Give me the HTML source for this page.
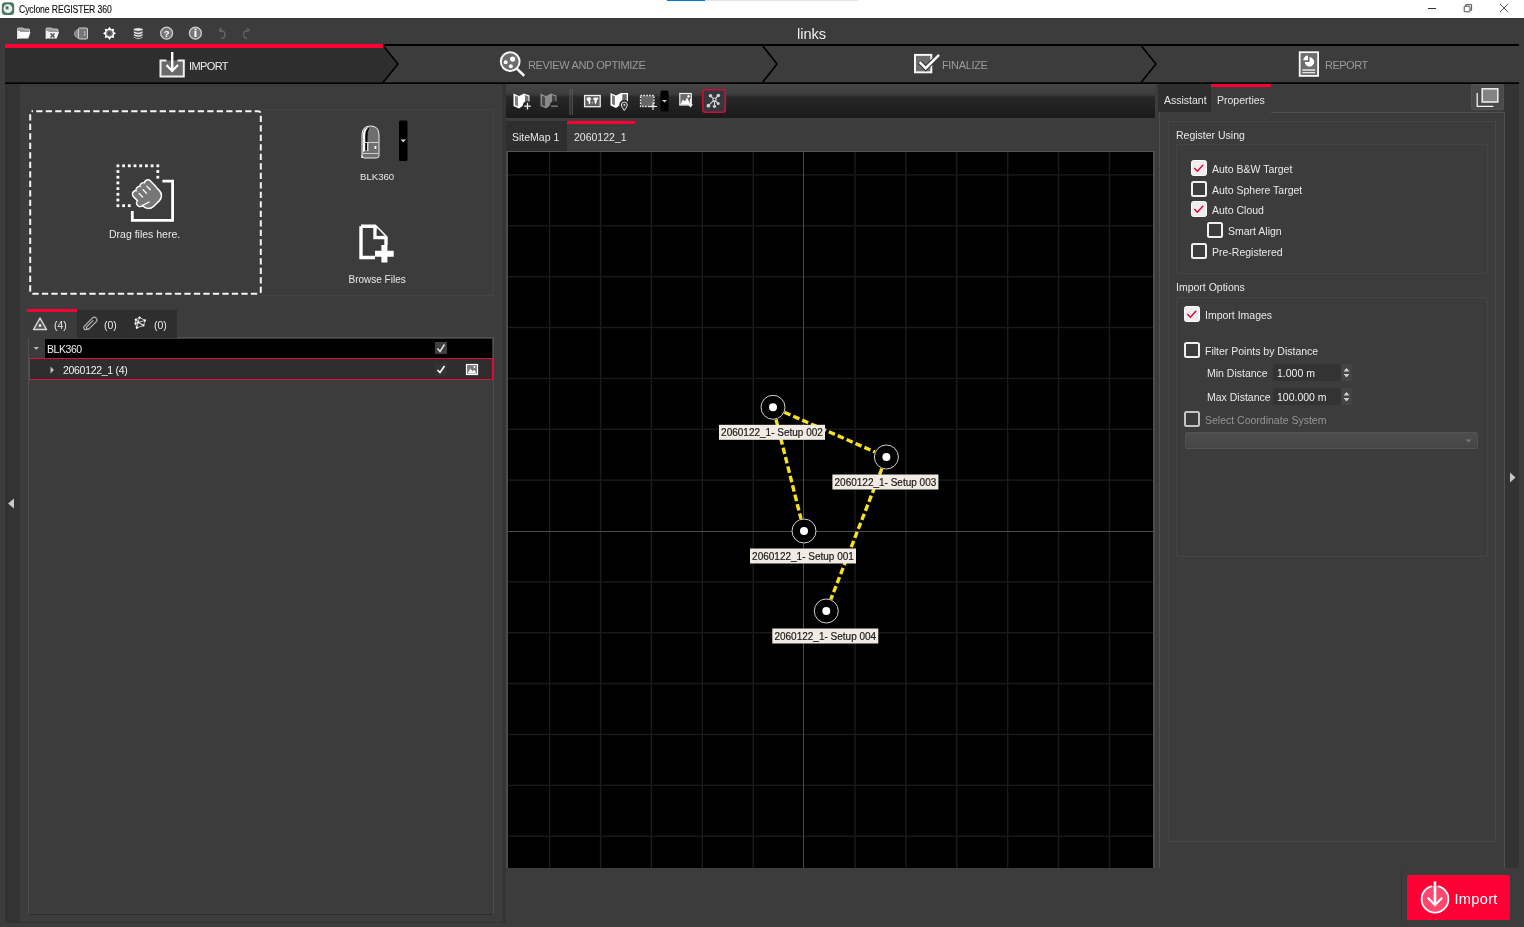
<!DOCTYPE html>
<html><head><meta charset="utf-8">
<style>
*{box-sizing:border-box;margin:0;padding:0}
html,body{width:1524px;height:927px;overflow:hidden;background:#3c3c3c;font-family:"Liberation Sans",sans-serif;color:#e6e6e6;font-size:10.5px}
.a{position:absolute}
.t{position:absolute;white-space:nowrap;line-height:1}
svg{position:absolute;overflow:visible}
</style></head><body>
<!-- title bar -->
<div class="a" style="left:0;top:0;width:1524px;height:18px;background:#fff"></div>
<div class="a" style="left:667px;top:0;width:38px;height:1px;background:#0078d7"></div>
<div class="a" style="left:705px;top:0;width:153px;height:1px;background:#e2e2e2"></div>
<svg style="left:0;top:0" width="18" height="18"><rect x="1.8" y="2.3" width="12.4" height="12.6" rx="3.5" fill="#487a62"/><circle cx="7.9" cy="8.6" r="4.4" fill="#eef3ef"/><circle cx="7.2" cy="7.9" r="2" fill="#9ab5a6"/><circle cx="7" cy="7.7" r="1.2" fill="#3f6f58"/></svg>
<div class="t" style="left:18.5px;top:4px;font-size:10.5px;letter-spacing:-0.1px;transform:scaleX(0.82);transform-origin:0 0;color:#111;-webkit-text-stroke:0.15px #111">Cyclone REGISTER 360</div>
<svg style="left:1420px;top:0" width="104" height="18">
 <line x1="8" y1="8.5" x2="16" y2="8.5" stroke="#333" stroke-width="1"/>
 <rect x="44.2" y="6.2" width="5.8" height="5.6" rx="0.6" fill="none" stroke="#333" stroke-width="0.9"/><path d="M45.8 6 V4.6 H51.6 V10.2 H50.2" fill="none" stroke="#444" stroke-width="0.9"/>
 <path d="M80 4 L88.2 12 M88.2 4 L80 12" stroke="#333" stroke-width="0.9"/>
</svg>

<!-- app body -->
<svg style="left:0;top:18px" width="260" height="26">
 <!-- open folder -->
 <path d="M17.5 21 V11 Q17.5 10 18.5 10 H23 L24 11 H28.5 Q29.5 11 29.5 12 V14" fill="#9a9a9a" stroke="#ddd" stroke-width="0.8"/>
 <path d="M17.3 20.5 L19.8 14 H30.5 L28.3 20.5 Z" fill="#fff"/>
 <path d="M17.5 20.6 V13 H20 V19 Z" fill="#f4f4f4"/>
 <!-- close folder -->
 <path d="M46 21 V11 Q46 10 47 10 H51.5 L52.5 11 H57 Q58 11 58 12 V14" fill="#9a9a9a" stroke="#ddd" stroke-width="0.8"/>
 <path d="M45.8 20.5 L48.3 14 H59 L56.8 20.5 Z" fill="#f2f2f2"/>
 <path d="M46 20.6 V13 H48.5 V19 Z" fill="#eee"/>
 <path d="M50.5 15.5 L54.5 19.5 M54.5 15.5 L50.5 19.5" stroke="#555" stroke-width="1.6"/>
 <!-- scanner-ish -->
 <path d="M74.5 15 Q74.5 13.5 76 12.5 L78.5 11 V20.5 L76 19 Q74.5 18 74.5 16.5 Z" fill="#8a8a8a" stroke="#aaa" stroke-width="0.7"/>
 <rect x="78.5" y="10" width="9" height="11" rx="1" fill="#777" stroke="#cfcfcf" stroke-width="1"/>
 <rect x="84" y="13.5" width="1.3" height="1.3" fill="#ddd"/><rect x="84" y="16" width="1.3" height="1.3" fill="#ddd"/>
 <!-- gear -->
 <defs><radialGradient id="gg"><stop offset="0" stop-color="#3a3a3a"/><stop offset="1" stop-color="#7a7a7a"/></radialGradient></defs>
 <polygon points="109.50,8.75 111.22,11.19 114.17,10.68 113.66,13.63 116.10,15.35 113.66,17.07 114.17,20.02 111.22,19.51 109.50,21.95 107.78,19.51 104.83,20.02 105.34,17.07 102.90,15.35 105.34,13.63 104.83,10.68 107.78,11.19" fill="#fff"/>
 <circle cx="109.5" cy="15.35" r="3.3" fill="url(#gg)"/>
 <!-- db -->
 <g fill="#eee" stroke="#3c3c3c" stroke-width="0.8">
  <path d="M133.5 18 Q138.2 21.5 143 18 V19.5 Q138.2 23 133.5 19.5 Z"/>
  <path d="M133.5 15 Q138.2 18.5 143 15 V17.5 Q138.2 21 133.5 17.5 Z"/>
  <path d="M133.5 12.5 Q138.2 16 143 12.5 V15 Q138.2 18.5 133.5 15 Z"/>
  <ellipse cx="138.2" cy="11.5" rx="4.8" ry="1.8"/>
 </g>
 <!-- help -->
 <circle cx="166.6" cy="15.2" r="6" fill="#777" stroke="#d0d0d0" stroke-width="1.2"/>
 <text x="166.6" y="19" text-anchor="middle" font-family="Liberation Sans" font-weight="bold" font-size="9.5" fill="#fff">?</text>
 <circle cx="195.4" cy="15.2" r="6" fill="#777" stroke="#d0d0d0" stroke-width="1.2"/>
 <rect x="194.5" y="10.6" width="1.9" height="1.7" fill="#fff"/><rect x="194.5" y="13" width="1.9" height="6" fill="#fff"/>
 <!-- undo/redo -->
 <path d="M219 12.5 Q225 12 225 16.5 Q225 20 221.5 20.5 M219 12.5 L221.5 10 M219 12.5 L222 14" fill="none" stroke="#6a6a6a" stroke-width="1.3"/>
 <path d="M249.5 12.5 Q243.5 12 243.5 16.5 Q243.5 20 247 20.5 M249.5 12.5 L247 10 M249.5 12.5 L246.5 14" fill="none" stroke="#626262" stroke-width="1.3"/>
</svg>
<div class="t" style="left:797px;top:27px;font-size:14.5px;color:#f0f0f0">links</div>

<!-- steps bar -->
<svg style="left:0;top:44px" width="1524" height="41" overflow="visible">
 <rect x="5" y="0" width="1514" height="40" fill="#3c3c3c"/>
 <path d="M5 1 H383 L398 20 L383 39 H5 Z" fill="#2e2e2e"/>
 <rect x="5" y="0" width="1514" height="2" fill="#000"/>
 <rect x="5" y="38" width="1514" height="1" fill="#121212"/>
 <rect x="5" y="39" width="1514" height="1" fill="#000"/>
 <rect x="5" y="0" width="378" height="4" fill="#ff0033"/>
 <path d="M383 1.5 L398 20 L383 38.5" fill="none" stroke="#000" stroke-width="1.6"/>
 <path d="M762.5 1.5 L777 20 L762.5 38.5" fill="none" stroke="#000" stroke-width="1.6"/>
 <path d="M1141 1.5 L1156 20 L1141 38.5" fill="none" stroke="#000" stroke-width="1.6"/>
</svg>
<div class="t" style="left:189px;top:61px;font-size:11px;letter-spacing:-0.6px;color:#eee">IMPORT</div>
<div class="t" style="left:528px;top:60px;font-size:11px;letter-spacing:-0.35px;color:#9a9a9a">REVIEW AND OPTIMIZE</div>
<div class="t" style="left:942px;top:60px;font-size:11px;letter-spacing:-0.35px;color:#9a9a9a">FINALIZE</div>
<div class="t" style="left:1325px;top:60px;font-size:11px;letter-spacing:-0.5px;color:#9a9a9a">REPORT</div>
<svg style="left:150px;top:48px" width="50" height="34">
 <path d="M16.5 12.5 H10.5 V28.5 H33.8 V12.5 H27.5" fill="#6a6a6a" stroke="#f0f0f0" stroke-width="2"/>
 <rect x="17.5" y="13.5" width="9" height="3" fill="#6a6a6a"/>
 <path d="M22.2 4 V22" stroke="#fff" stroke-width="2.4"/>
 <path d="M16.5 17 L22.2 23 L28 17" fill="none" stroke="#fff" stroke-width="2.2"/>
</svg>
<svg style="left:495px;top:48px" width="34" height="34">
 <circle cx="15.2" cy="13.6" r="9.4" fill="#6c6c6c" stroke="#f6f6f6" stroke-width="2"/>
 <path d="M21.8 20.6 L29.2 27.8" stroke="#f6f6f6" stroke-width="2.6"/>
 <circle cx="17.6" cy="11.1" r="2.6" fill="#fff"/><circle cx="10.7" cy="14.3" r="2" fill="#fff"/><circle cx="15.8" cy="18.2" r="2" fill="#fff"/>
</svg>
<svg style="left:910px;top:48px" width="34" height="34">
 <rect x="5" y="6.9" width="16.3" height="17.4" fill="#6c6c6c" stroke="#f6f6f6" stroke-width="2"/>
 <path d="M9.7 14.1 L15.7 20.2 L29.1 6.8" fill="none" stroke="#3c3c3c" stroke-width="5"/>
 <path d="M9.7 14.1 L15.7 20.2 L29.1 6.8" fill="none" stroke="#fff" stroke-width="2.5"/>
</svg>
<svg style="left:1290px;top:48px" width="34" height="34">
 <rect x="9.7" y="4.2" width="18.4" height="23.7" fill="#6c6c6c" stroke="#f6f6f6" stroke-width="1.8"/>
 <path d="M19.5 14 V9.3 A4.7 4.7 0 1 1 14.8 14 Z" fill="#fff"/>
 <path d="M18 12.3 H13.3 A4.7 4.7 0 0 1 18 7.6 Z" fill="#fff"/>
 <path d="M12.3 22 H25 M12.3 24.6 H25" stroke="#e6e6e6" stroke-width="1.3"/>
</svg>

<!-- left panel -->
<div class="a" style="left:5px;top:84px;width:15px;height:839px;background:#333"></div>
<div class="a" style="left:20px;top:922px;width:486px;height:1px;background:#353535"></div>
<div class="a" style="left:502px;top:84px;width:4px;height:839px;background:#353535"></div>
<svg style="left:5px;top:496px" width="15" height="16"><path d="M3 7.5 L9 2.5 V12.5 Z" fill="#c8c8c8"/></svg>
<!-- drop zone -->
<div class="a" style="left:261px;top:109px;width:233px;height:187px;border:1px solid #444;border-left:none"></div>
<svg style="left:29px;top:110px" width="234" height="186"><rect x="1.2" y="1.2" width="230.6" height="182.6" rx="2.5" fill="none" stroke="#f4f4f4" stroke-width="2" stroke-dasharray="6.3 3.2" stroke-dashoffset="6"/></svg>
<svg style="left:105px;top:155px" width="80" height="80">
 <g fill="#fff">
 <rect x="11.5" y="9.4" width="2.8" height="2.8"/><rect x="17.2" y="9.4" width="2.8" height="2.8"/><rect x="22.9" y="9.4" width="2.8" height="2.8"/><rect x="28.6" y="9.4" width="2.8" height="2.8"/><rect x="34.3" y="9.4" width="2.8" height="2.8"/><rect x="40" y="9.4" width="2.8" height="2.8"/><rect x="45.7" y="9.4" width="2.8" height="2.8"/><rect x="51.4" y="9.4" width="2.8" height="2.8"/>
 <rect x="51.4" y="15.1" width="2.8" height="2.8"/><rect x="51.4" y="20.8" width="2.8" height="2.8"/>
 <rect x="11.5" y="15.1" width="2.8" height="2.8"/><rect x="11.5" y="20.8" width="2.8" height="2.8"/><rect x="11.5" y="26.5" width="2.8" height="2.8"/><rect x="11.5" y="32.2" width="2.8" height="2.8"/><rect x="11.5" y="37.9" width="2.8" height="2.8"/><rect x="11.5" y="43.6" width="2.8" height="2.8"/><rect x="11.5" y="49.3" width="2.8" height="2.8"/>
 <rect x="17.2" y="49.3" width="2.8" height="2.8"/><rect x="22.9" y="49.3" width="2.8" height="2.8"/>
 </g>
 <path d="M57.4 26.1 H67.6 V65.4 H27.3 V56" fill="none" stroke="#fff" stroke-width="2.8"/>
 <g transform="translate(42.5 39.5) rotate(-44)">
  <g fill="#fff" stroke="#fff" stroke-width="3"><rect x="-10.5" y="-5" width="21" height="17" rx="6.5"/><rect x="-10.8" y="-11" width="5.6" height="13" rx="2.8"/><rect x="-5.4" y="-11.5" width="5.6" height="13" rx="2.8"/><rect x="0" y="-11.5" width="5.6" height="13" rx="2.8"/><rect x="5.2" y="-10.5" width="5.6" height="13" rx="2.8"/><rect x="-13" y="2" width="9" height="5.5" rx="2.7" transform="rotate(20)"/></g>
  <g fill="#777"><rect x="-10.5" y="-5" width="21" height="17" rx="6.5"/><rect x="-10.8" y="-11" width="5.6" height="13" rx="2.8"/><rect x="-5.4" y="-11.5" width="5.6" height="13" rx="2.8"/><rect x="0" y="-11.5" width="5.6" height="13" rx="2.8"/><rect x="5.2" y="-10.5" width="5.6" height="13" rx="2.8"/></g>
  <rect x="-13" y="2" width="9" height="5.5" rx="2.7" transform="rotate(20)" fill="#777"/>
  <path d="M-5.3 -6.5 V-1.5 M0.1 -6.5 V-1.5 M5.3 -6.5 V-1.5 M-11 4.5 L-4 6.5" stroke="#fff" stroke-width="1.2" stroke-linecap="round"/>
 </g>
</svg>
<div class="t" style="left:109px;top:229px;font-size:10.5px;color:#e8e8e8">Drag files here.</div>
<!-- scanner -->
<svg style="left:340px;top:110px" width="80" height="80">
 <path d="M22 48 V25 Q22 16 30.5 16 Q39 16 39 25 V45.5 Q39 48 36.5 48 H24.5 Q22 48 22 45.5 Z" fill="#6f6f6f" stroke="#ededed" stroke-width="1"/>
 <path d="M23 42 V25 Q23 18 28.5 17 Q25 20 25 26 V41 Z" fill="#fff"/>
 <path d="M25.5 40 V26 Q25.5 19.5 29.5 17.3 Q27.5 21 27.5 27 V40 Z" fill="#000"/>
 <path d="M22.5 32.5 H38.5 M22.5 43.5 H38.5" stroke="#ddd" stroke-width="0.9"/>
 <rect x="27" y="33" width="1.5" height="8" fill="#ddd"/>
 <rect x="34.5" y="36" width="1.8" height="3" fill="#fff"/>
 <rect x="59" y="10.5" width="8.5" height="40.5" rx="1.5" fill="#000"/>
 <path d="M60.5 29.5 H66 L63.25 32.3 Z" fill="#ddd"/>
</svg>
<div class="t" style="left:360px;top:172px;font-size:9.6px;color:#e8e8e8">BLK360</div>
<svg style="left:340px;top:215px" width="80" height="80">
 <path d="M21 11.2 H35 L46 22.5 V30 M41.5 42.5 H21 V11.2" fill="none" stroke="#fff" stroke-width="3.4" stroke-linejoin="miter"/>
 <path d="M35 11 V22.5 H46" fill="none" stroke="#fff" stroke-width="3.4"/>
 <path d="M36.8 12.8 V20.7 H44.7 Z" fill="#3c3c3c"/>
 <rect x="35" y="30" width="19" height="18.5" fill="#3c3c3c"/>
 <path d="M44.4 30 V47.6 M35 38.8 H53.7" stroke="#fff" stroke-width="6"/>
</svg>
<div class="t" style="left:348.5px;top:274.5px;font-size:10px;color:#e8e8e8">Browse Files</div>
<!-- tabs -->
<div class="a" style="left:77px;top:310px;width:100px;height:28px;background:#2e2e2e"></div>
<div class="a" style="left:27px;top:310px;width:50px;height:28px;background:#3b3b3b"></div>
<div class="a" style="left:27px;top:309px;width:50px;height:3px;background:#fa0032"></div>
<svg style="left:27px;top:312px" width="150" height="26">
 <path d="M13 6 L19.5 17.5 H6.5 Z" fill="#5a5a5a" stroke="#d8d8d8" stroke-width="1.5" stroke-linejoin="round"/>
 <circle cx="13" cy="13.5" r="1.3" fill="#fff"/>
 <path d="M58 17.6 L56.8 16.2 Q56.4 15.2 57.2 14.3 L65.3 6.2 Q67.3 4.3 69.1 6.1 Q70.9 7.9 69 9.8 L62 16.8 Q60.9 17.9 59.8 16.8 Q58.8 15.8 59.9 14.7 L66 8.6" fill="none" stroke="#b8b8b8" stroke-width="1.15" stroke-linecap="round" stroke-linejoin="round"/>
 <path d="M58 17.6 L61.5 17.2" stroke="#b8b8b8" stroke-width="1.15" stroke-linecap="round"/>
 <g stroke="#d8d8d8" stroke-width="0.9" fill="none"><path d="M112.6 5.5 L118 8.4 L116.5 13.5 L109.8 15.8 L108.5 11.5 L108.8 7.7 Z M111 10.5 L112.6 5.5 M111 10.5 L118 8.4 M111 10.5 L116.5 13.5 M111 10.5 L109.8 15.8 M111 10.5 L108.5 11.5 M111 10.5 L108.8 7.7 M108.8 7.7 L116.5 13.5"/></g>
 <g fill="#fff"><circle cx="112.6" cy="5.5" r="1.1"/><circle cx="118" cy="8.4" r="1.1"/><circle cx="116.5" cy="13.5" r="1.1"/><circle cx="109.8" cy="15.8" r="1.1"/><circle cx="108.5" cy="11.5" r="1.1"/><circle cx="108.8" cy="7.7" r="1.1"/><circle cx="111" cy="10.5" r="0.9"/></g>
</svg>
<div class="t" style="left:54px;top:320px;font-size:10.5px;color:#e8e8e8">(4)</div>
<div class="t" style="left:104px;top:320px;font-size:10.5px;color:#e8e8e8">(0)</div>
<div class="t" style="left:154px;top:320px;font-size:10.5px;color:#e8e8e8">(0)</div>
<!-- tree -->
<div class="a" style="left:28px;top:338px;width:466px;height:577px;border-left:1px solid #4e4e4e;border-right:1px solid #4e4e4e;border-bottom:1px solid #2e2e2e"></div>
<div class="a" style="left:29px;top:338px;width:16px;height:20px;background:#3b3b3b"></div>
<div class="a" style="left:45px;top:339px;width:447px;height:19px;background:#000"></div><div class="a" style="left:177px;top:337px;width:317px;height:1px;background:#505050"></div>
<svg style="left:29px;top:338px" width="16" height="20"><path d="M4.5 9 H10 L7.25 11.7 Z" fill="#bdbdbd"/></svg>
<div class="t" style="left:47px;top:344px;font-size:10.5px;letter-spacing:-0.45px;color:#f0f0f0">BLK360</div>
<div class="a" style="left:435px;top:342px;width:12px;height:12px;background:#3f3f3f"></div>
<svg style="left:435px;top:342px" width="12" height="12"><path d="M2.5 6.5 L5 9.5 L9.5 2.5" fill="none" stroke="#e0e0e0" stroke-width="1.5"/></svg>
<div class="a" style="left:29px;top:358.3px;width:463.5px;height:21.8px;border:1.6px solid #dc1038;background:#2e2e2e"></div>
<svg style="left:48px;top:364px" width="8" height="12"><path d="M2.5 2.5 V9.5 L6 6 Z" fill="#bdbdbd"/></svg>
<div class="t" style="left:63px;top:365px;font-size:10.5px;letter-spacing:-0.3px;color:#f0f0f0">2060122_1 (4)</div>
<div class="a" style="left:435px;top:363px;width:12px;height:13px;background:#333"></div>
<svg style="left:435px;top:363px" width="12" height="13"><path d="M2.5 7 L5 9.5 L9.5 3" fill="none" stroke="#fff" stroke-width="1.6"/></svg>
<svg style="left:464px;top:362px" width="16" height="15"><rect x="2.5" y="2.5" width="11" height="10" fill="#777" stroke="#fff" stroke-width="1.2"/><path d="M3.5 11.5 L6.5 6.5 L8.5 9.5 L10 7.5 L12.5 11.5 Z" fill="#fff"/><circle cx="10.5" cy="5" r="1" fill="#fff"/></svg>


<!-- center panel -->
<div class="a" style="left:506px;top:84px;width:649px;height:34px;background:linear-gradient(#454545 0px,#3e3e3e 9px,#383838 11px,#282828 13px,#1a1a1a 34px)"></div>
<svg style="left:506px;top:84px" width="240" height="34">
 <!-- map plus -->
 <g transform="translate(7 9)">
  <path d="M0.5 0.5 L6 3 L11 0.5 L16.5 2.5 V14 L11 12 L6 15.5 L0.5 13 Z" fill="#fff"/>
  <path d="M2 2.5 L5 4 V13.5 L2 12 Z" fill="#808080"/>
  <path d="M12 2 L15.5 3.5 V9 H12 Z" fill="#707070"/>
  <circle cx="14.5" cy="13" r="4.8" fill="#222"/>
  <path d="M14.5 9.8 V16.5 M11.2 13.2 H17.8" stroke="#f0f0f0" stroke-width="1.3"/>
 </g>
 <g transform="translate(34 9)" opacity="0.55">
  <path d="M0.5 0.5 L6 3 L11 0.5 L16.5 2.5 V14 L11 12 L6 15.5 L0.5 13 Z" fill="#ddd"/>
  <path d="M2 2.5 L5 4 V13.5 L2 12 Z" fill="#666"/>
  <path d="M12 2 L15.5 3.5 V9 H12 Z" fill="#555"/>
  <circle cx="14.5" cy="13" r="4.8" fill="#222"/>
  <path d="M11.2 13.2 H17.8" stroke="#ddd" stroke-width="1.3"/>
 </g>
 <rect x="63.5" y="5" width="1" height="26" fill="#5a5a5a"/><rect x="65.8" y="5" width="1" height="26" fill="#5a5a5a"/>
 <!-- world -->
 <rect x="78.6" y="11.5" width="15.6" height="11.2" fill="#5e5e5e" stroke="#eee" stroke-width="1.3"/>
 <path d="M80.5 14.2 Q82 13 84.5 13.5 L85.2 15.5 L84 16.3 L84.5 18 L83.8 20.5 L82.6 19.5 L82.5 17.5 L81 16.5 Z" fill="#fff"/>
 <path d="M87.5 13.8 Q89.5 13 92 13.8 L92.3 15 L91 16 L90.5 18.5 L89.5 20.5 L88.5 18.5 L88.6 16.5 L87.4 15.8 Z" fill="#fff"/>
 <path d="M85.5 18 L86.5 20.5 L87 17.5" fill="#aaa"/>
 <!-- map pin -->
 <g transform="translate(104 8)">
  <path d="M0.5 1 L6 3.5 L11 1 L18 1 V10 L11 12.5 L6 16 L0.5 13.5 Z" fill="#fff"/>
  <path d="M2 3 L5 4.5 V13.5 L2 12 Z" fill="#7a7a7a"/>
  <path d="M12.3 2.3 H16.7 V9 L12.3 10.5 Z" fill="#6a6a6a"/>
  <circle cx="14.3" cy="13" r="5" fill="#222"/>
  <path d="M14.3 18.5 Q11.3 15 11.3 13 A3 3 0 0 1 17.3 13 Q17.3 15 14.3 18.5 Z" fill="#3a3a3a" stroke="#e6e6e6" stroke-width="1"/>
  <circle cx="14.3" cy="12.8" r="0.9" fill="#eee"/>
 </g>
 <!-- rect select -->
 <rect x="134.5" y="11.5" width="13.5" height="11" fill="#666" stroke="#eee" stroke-width="1.3" stroke-dasharray="1.6 1.3"/>
 <path d="M147 18.5 V26 M143.5 22.5 H151" stroke="#eee" stroke-width="1.1"/>
 <rect x="154.5" y="6.5" width="8" height="21" rx="1.5" fill="#000"/>
 <path d="M156 16 H161 L158.5 18.5 Z" fill="#ccc"/>
 <!-- image import -->
 <rect x="173.8" y="9.5" width="11.5" height="11.5" fill="#6a6a6a" stroke="#eee" stroke-width="1.2"/>
 <path d="M174.5 20.5 L177 15.5 L179 17.5 L181 13.5 L184.5 20.5 Z" fill="#fff"/>
 <circle cx="182.5" cy="12.2" r="1.2" fill="#fff"/>
 <path d="M184.5 15 V22.5" stroke="#fff" stroke-width="1.2"/><path d="M182 20.5 L184.5 23.5 L187 20.5 Z" fill="#fff"/>
 <!-- network active -->
 <rect x="196.8" y="5.8" width="22.5" height="22.5" rx="2.5" fill="#34373b" stroke="#c8123a" stroke-width="1.6"/>
 <g stroke="#d0d0d0" stroke-width="1.2" fill="none">
  <path d="M208.5 15.6 L204.5 11.7 M208.5 15.6 L212.3 11.5 M208.5 15.6 L202.4 21.7 M208.5 15.6 L212.2 19.6 M208.5 15.6 V22.5"/>
 </g>
 <g fill="#d0d0d0"><circle cx="204.5" cy="11.7" r="1.8"/><circle cx="212.3" cy="11.5" r="1.8"/><circle cx="202.4" cy="21.7" r="1.9"/><circle cx="212.2" cy="19.6" r="1.5"/><circle cx="208.5" cy="22.3" r="1.6"/><circle cx="208.5" cy="15.6" r="2.1"/></g>
 <circle cx="208.5" cy="15.4" r="0.9" fill="#222"/>
</svg>
<div class="a" style="left:506px;top:118px;width:649px;height:3px;background:#3d3d3d"></div><div class="a" style="left:506px;top:151px;width:649px;height:1px;background:#525252"></div>
<div class="a" style="left:506px;top:121px;width:61px;height:30px;background:#2e2e2e"></div>
<div class="a" style="left:567px;top:121px;width:68px;height:3px;background:#fa0032"></div>
<div class="t" style="left:512px;top:132px;font-size:10.5px">SiteMap 1</div>
<div class="t" style="left:574px;top:132px;font-size:10.5px">2060122_1</div>
<svg style="left:506px;top:152px" width="649" height="716" shape-rendering="crispEdges">
<rect x="0" y="0" width="649" height="716" fill="#000"/>
<rect x="0" y="0" width="2" height="716" fill="#4c4c4c"/>
<rect x="647" y="0" width="2" height="716" fill="#4c4c4c"/>
<g>
<rect x="2" y="22" width="645" height="1" fill="rgb(21,21,21)"/>
<rect x="2" y="23" width="645" height="1" fill="rgb(16,16,16)"/>
<rect x="2" y="73" width="645" height="1" fill="rgb(24,24,24)"/>
<rect x="2" y="74" width="645" height="1" fill="rgb(12,12,12)"/>
<rect x="2" y="123" width="645" height="1" fill="rgb(1,1,1)"/>
<rect x="2" y="124" width="645" height="1" fill="rgb(26,26,26)"/>
<rect x="2" y="125" width="645" height="1" fill="rgb(9,9,9)"/>
<rect x="2" y="174" width="645" height="1" fill="rgb(5,5,5)"/>
<rect x="2" y="175" width="645" height="1" fill="rgb(26,26,26)"/>
<rect x="2" y="176" width="645" height="1" fill="rgb(6,6,6)"/>
<rect x="2" y="225" width="645" height="1" fill="rgb(8,8,8)"/>
<rect x="2" y="226" width="645" height="1" fill="rgb(26,26,26)"/>
<rect x="2" y="227" width="645" height="1" fill="rgb(2,2,2)"/>
<rect x="2" y="276" width="645" height="1" fill="rgb(11,11,11)"/>
<rect x="2" y="277" width="645" height="1" fill="rgb(25,25,25)"/>
<rect x="2" y="327" width="645" height="1" fill="rgb(15,15,15)"/>
<rect x="2" y="328" width="645" height="1" fill="rgb(22,22,22)"/>
<rect x="2" y="379" width="645" height="1" fill="#4a4a4a"/>
<rect x="2" y="429" width="645" height="1" fill="rgb(22,22,22)"/>
<rect x="2" y="430" width="645" height="1" fill="rgb(15,15,15)"/>
<rect x="2" y="480" width="645" height="1" fill="rgb(25,25,25)"/>
<rect x="2" y="481" width="645" height="1" fill="rgb(11,11,11)"/>
<rect x="2" y="530" width="645" height="1" fill="rgb(2,2,2)"/>
<rect x="2" y="531" width="645" height="1" fill="rgb(26,26,26)"/>
<rect x="2" y="532" width="645" height="1" fill="rgb(8,8,8)"/>
<rect x="2" y="581" width="645" height="1" fill="rgb(6,6,6)"/>
<rect x="2" y="582" width="645" height="1" fill="rgb(26,26,26)"/>
<rect x="2" y="583" width="645" height="1" fill="rgb(5,5,5)"/>
<rect x="2" y="632" width="645" height="1" fill="rgb(9,9,9)"/>
<rect x="2" y="633" width="645" height="1" fill="rgb(26,26,26)"/>
<rect x="2" y="634" width="645" height="1" fill="rgb(1,1,1)"/>
<rect x="2" y="683" width="645" height="1" fill="rgb(12,12,12)"/>
<rect x="2" y="684" width="645" height="1" fill="rgb(24,24,24)"/>
</g><g style="mix-blend-mode:lighten">
<rect x="43" y="0" width="1" height="716" fill="rgb(28,28,28)"/>
<rect x="44" y="0" width="1" height="716" fill="rgb(10,10,10)"/>
<rect x="93" y="0" width="1" height="716" fill="rgb(4,4,4)"/>
<rect x="94" y="0" width="1" height="716" fill="rgb(28,28,28)"/>
<rect x="95" y="0" width="1" height="716" fill="rgb(7,7,7)"/>
<rect x="144" y="0" width="1" height="716" fill="rgb(8,8,8)"/>
<rect x="145" y="0" width="1" height="716" fill="rgb(28,28,28)"/>
<rect x="146" y="0" width="1" height="716" fill="rgb(4,4,4)"/>
<rect x="195" y="0" width="1" height="716" fill="rgb(11,11,11)"/>
<rect x="196" y="0" width="1" height="716" fill="rgb(28,28,28)"/>
<rect x="246" y="0" width="1" height="716" fill="rgb(14,14,14)"/>
<rect x="247" y="0" width="1" height="716" fill="rgb(25,25,25)"/>
<rect x="297" y="0" width="1" height="716" fill="#484848"/>
<rect x="348" y="0" width="1" height="716" fill="rgb(20,20,20)"/>
<rect x="349" y="0" width="1" height="716" fill="rgb(19,19,19)"/>
<rect x="399" y="0" width="1" height="716" fill="rgb(23,23,23)"/>
<rect x="400" y="0" width="1" height="716" fill="rgb(16,16,16)"/>
<rect x="450" y="0" width="1" height="716" fill="rgb(26,26,26)"/>
<rect x="451" y="0" width="1" height="716" fill="rgb(13,13,13)"/>
<rect x="501" y="0" width="1" height="716" fill="rgb(28,28,28)"/>
<rect x="502" y="0" width="1" height="716" fill="rgb(10,10,10)"/>
<rect x="551" y="0" width="1" height="716" fill="rgb(4,4,4)"/>
<rect x="552" y="0" width="1" height="716" fill="rgb(28,28,28)"/>
<rect x="553" y="0" width="1" height="716" fill="rgb(7,7,7)"/>
<rect x="602" y="0" width="1" height="716" fill="rgb(7,7,7)"/>
<rect x="603" y="0" width="1" height="716" fill="rgb(28,28,28)"/>
<rect x="604" y="0" width="1" height="716" fill="rgb(4,4,4)"/>
</g></svg>
<svg style="left:506px;top:152px" width="649" height="716">
<line x1="278.4" y1="260.3" x2="369.0" y2="300.0" stroke="#f6e020" stroke-width="3.4" stroke-dasharray="6.6 3.1"/>
<line x1="270.0" y1="267.4" x2="295.0" y2="366.9" stroke="#f6e020" stroke-width="3.4" stroke-dasharray="6.6 3.1"/>
<line x1="375.9" y1="316.6" x2="324.8" y2="447.4" stroke="#f6e020" stroke-width="3.4" stroke-dasharray="6.6 3.1"/>
<circle cx="298" cy="379" r="12" fill="#000" stroke="#cfcfcf" stroke-width="1"/>
<circle cx="298" cy="379" r="4" fill="#fff"/>
<rect x="244.0" y="396.5" width="106" height="15" fill="#f2ebe3"/>
<text x="297.0" y="407.5" text-anchor="middle" font-family="Liberation Sans" font-size="10" fill="#1c1c1c" stroke="#1c1c1c" stroke-width="0.2">2060122_1- Setup 001</text>
<circle cx="267" cy="255.3" r="12" fill="#000" stroke="#cfcfcf" stroke-width="1"/>
<circle cx="267" cy="255.3" r="4" fill="#fff"/>
<rect x="213.0" y="272.8" width="106" height="15" fill="#f2ebe3"/>
<text x="266.0" y="283.8" text-anchor="middle" font-family="Liberation Sans" font-size="10" fill="#1c1c1c" stroke="#1c1c1c" stroke-width="0.2">2060122_1- Setup 002</text>
<circle cx="380.4" cy="305" r="12" fill="#000" stroke="#cfcfcf" stroke-width="1"/>
<circle cx="380.4" cy="305" r="4" fill="#fff"/>
<rect x="326.4" y="322.5" width="106" height="15" fill="#f2ebe3"/>
<text x="379.4" y="333.5" text-anchor="middle" font-family="Liberation Sans" font-size="10" fill="#1c1c1c" stroke="#1c1c1c" stroke-width="0.2">2060122_1- Setup 003</text>
<circle cx="320.29999999999995" cy="459" r="12" fill="#000" stroke="#cfcfcf" stroke-width="1"/>
<circle cx="320.29999999999995" cy="459" r="4" fill="#fff"/>
<rect x="266.3" y="476.5" width="106" height="15" fill="#f2ebe3"/>
<text x="319.3" y="487.5" text-anchor="middle" font-family="Liberation Sans" font-size="10" fill="#1c1c1c" stroke="#1c1c1c" stroke-width="0.2">2060122_1- Setup 004</text>
</svg>

<!-- right panel -->
<div class="a" style="left:1158px;top:84px;width:53px;height:28px;background:#2e2e2e"></div>
<div class="a" style="left:1211px;top:84px;width:60px;height:3px;background:#fa0032"></div>
<div class="t" style="left:1164px;top:95px;font-size:10.5px">Assistant</div>
<div class="t" style="left:1217px;top:95px;font-size:10.5px">Properties</div>
<div class="a" style="left:1504px;top:84px;width:15px;height:784px;background:#333"></div>
<svg style="left:1504px;top:469.5px" width="15" height="16"><path d="M6 2.5 L11.5 7.5 L6 12.5 Z" fill="#c8c8c8"/></svg>
<div class="a" style="left:1471px;top:84px;width:33px;height:26px;background:#4a4a4a;border-radius:2px;border:1px solid #525252"></div>
<svg style="left:1471px;top:84px" width="33" height="26"><rect x="11.2" y="4.8" width="15.6" height="13.2" fill="#838383" stroke="#f2f2f2" stroke-width="1.5"/><path d="M6.2 9 V22.4 H22.4" fill="none" stroke="#f2f2f2" stroke-width="1.3"/></svg>
<!-- properties frame -->
<div class="a" style="left:1159px;top:112px;width:346px;height:756px;border-left:1px solid #505050;border-right:1px solid #505050"></div><div class="a" style="left:1271px;top:112px;width:234px;height:1px;background:#505050"></div>
<div class="a" style="left:1168px;top:121px;width:328px;height:721px;border:1px solid #434343;border-right-color:#484848;border-bottom-color:#484848"></div>
<div class="t" style="left:1176px;top:130px;font-size:10.5px;color:#e8e8e8">Register Using</div>
<div class="a" style="left:1176px;top:144px;width:312px;height:130px;border:1px solid #444;border-radius:2px"></div>
<div class="t" style="left:1176px;top:282px;font-size:10.5px;color:#e8e8e8">Import Options</div>
<div class="a" style="left:1176px;top:297px;width:312px;height:260px;border:1px solid #444;border-radius:2px"></div>
<div class="a" style="left:1191px;top:160px;width:16px;height:16px;background:#eeeeee;border-radius:2.5px;border:1px solid #fff"></div><svg style="left:1191px;top:160px" width="16" height="16"><path d="M3.3 8 L6.3 11.3 L12.2 4.7" fill="none" stroke="#e8003a" stroke-width="1.4"/></svg><div class="t" style="left:1212px;top:164px;font-size:10.5px;color:#e8e8e8">Auto B&amp;W Target</div>
<div class="a" style="left:1191px;top:181px;width:16px;height:16px;border:2px solid #f0f0f0;border-radius:2.5px"></div><div class="t" style="left:1212px;top:185px;font-size:10.5px;color:#e8e8e8">Auto Sphere Target</div>
<div class="a" style="left:1191px;top:201px;width:16px;height:16px;background:#eeeeee;border-radius:2.5px;border:1px solid #fff"></div><svg style="left:1191px;top:201px" width="16" height="16"><path d="M3.3 8 L6.3 11.3 L12.2 4.7" fill="none" stroke="#e8003a" stroke-width="1.4"/></svg><div class="t" style="left:1212px;top:205px;font-size:10.5px;color:#e8e8e8">Auto Cloud</div>
<div class="a" style="left:1207px;top:222px;width:16px;height:16px;border:2px solid #f0f0f0;border-radius:2.5px"></div><div class="t" style="left:1228px;top:226px;font-size:10.5px;color:#e8e8e8">Smart Align</div>
<div class="a" style="left:1191px;top:243px;width:16px;height:16px;border:2px solid #f0f0f0;border-radius:2.5px"></div><div class="t" style="left:1212px;top:247px;font-size:10.5px;color:#e8e8e8">Pre-Registered</div>
<div class="a" style="left:1184px;top:306px;width:16px;height:16px;background:#eeeeee;border-radius:2.5px;border:1px solid #fff"></div><svg style="left:1184px;top:306px" width="16" height="16"><path d="M3.3 8 L6.3 11.3 L12.2 4.7" fill="none" stroke="#e8003a" stroke-width="1.4"/></svg><div class="t" style="left:1205px;top:310px;font-size:10.5px;color:#e8e8e8">Import Images</div>
<div class="a" style="left:1184px;top:342px;width:16px;height:16px;border:2px solid #f0f0f0;border-radius:2.5px"></div><div class="t" style="left:1205px;top:346px;font-size:10.5px;color:#e8e8e8">Filter Points by Distance</div>
<div class="a" style="left:1184px;top:411px;width:16px;height:16px;border:2px solid #c4c4c4;border-radius:2.5px"></div><div class="t" style="left:1205px;top:415px;font-size:10.5px;color:#959595">Select Coordinate System</div>
<div class="t" style="left:1207px;top:368px;font-size:10.5px;color:#e8e8e8">Min Distance</div>
<div class="t" style="left:1207px;top:392px;font-size:10.5px;color:#e8e8e8">Max Distance</div>
<div class="a" style="left:1273px;top:364px;width:68px;height:17px;background:#333;border-radius:2px"></div>
<div class="a" style="left:1341px;top:364px;width:11px;height:17px;background:#444;border-radius:2px"></div>
<div class="a" style="left:1273px;top:388px;width:68px;height:17px;background:#333;border-radius:2px"></div>
<div class="a" style="left:1341px;top:388px;width:11px;height:17px;background:#444;border-radius:2px"></div>
<svg style="left:1341px;top:364px" width="11" height="41"><path d="M2.5 7.5 L5.5 4 L8.5 7.5 Z M2.5 10 L5.5 13.5 L8.5 10 Z M2.5 31.5 L5.5 28 L8.5 31.5 Z M2.5 34 L5.5 37.5 L8.5 34 Z" fill="#cfcfcf"/></svg>
<div class="t" style="left:1277px;top:368px;font-size:10.5px;color:#f0f0f0">1.000 m</div>
<div class="t" style="left:1277px;top:392px;font-size:10.5px;color:#f0f0f0">100.000 m</div>
<div class="a" style="left:1185px;top:432px;width:293px;height:17px;background:linear-gradient(#4d4d4d,#464646);border:1px solid #525252;border-radius:2px"></div>
<svg style="left:1463px;top:434px" width="12" height="12"><path d="M2.5 5.5 H8.5 L5.5 8.5 Z" fill="#777"/></svg>
<!-- bottom import button -->
<div class="a" style="left:1401px;top:869px;width:1px;height:54px;background:#333"></div>
<div class="a" style="left:1407px;top:875px;width:103px;height:45px;background:#ff0035;border-radius:2px"></div>
<svg style="left:1407px;top:875px" width="103" height="45"><circle cx="28" cy="24.2" r="13.4" fill="#ff4870" stroke="#fff" stroke-width="1.8"/><path d="M28 5 V11.5" stroke="#ff0035" stroke-width="6.5"/><path d="M28 6.5 V30" stroke="#fff" stroke-width="2.6"/><path d="M20.8 22.7 L28 30 L35.2 22.7" fill="none" stroke="#fff" stroke-width="2.1"/></svg>
<div class="t" style="left:1454.5px;top:892px;font-size:14.6px;letter-spacing:0.3px;color:#fff">Import</div>


</body></html>
